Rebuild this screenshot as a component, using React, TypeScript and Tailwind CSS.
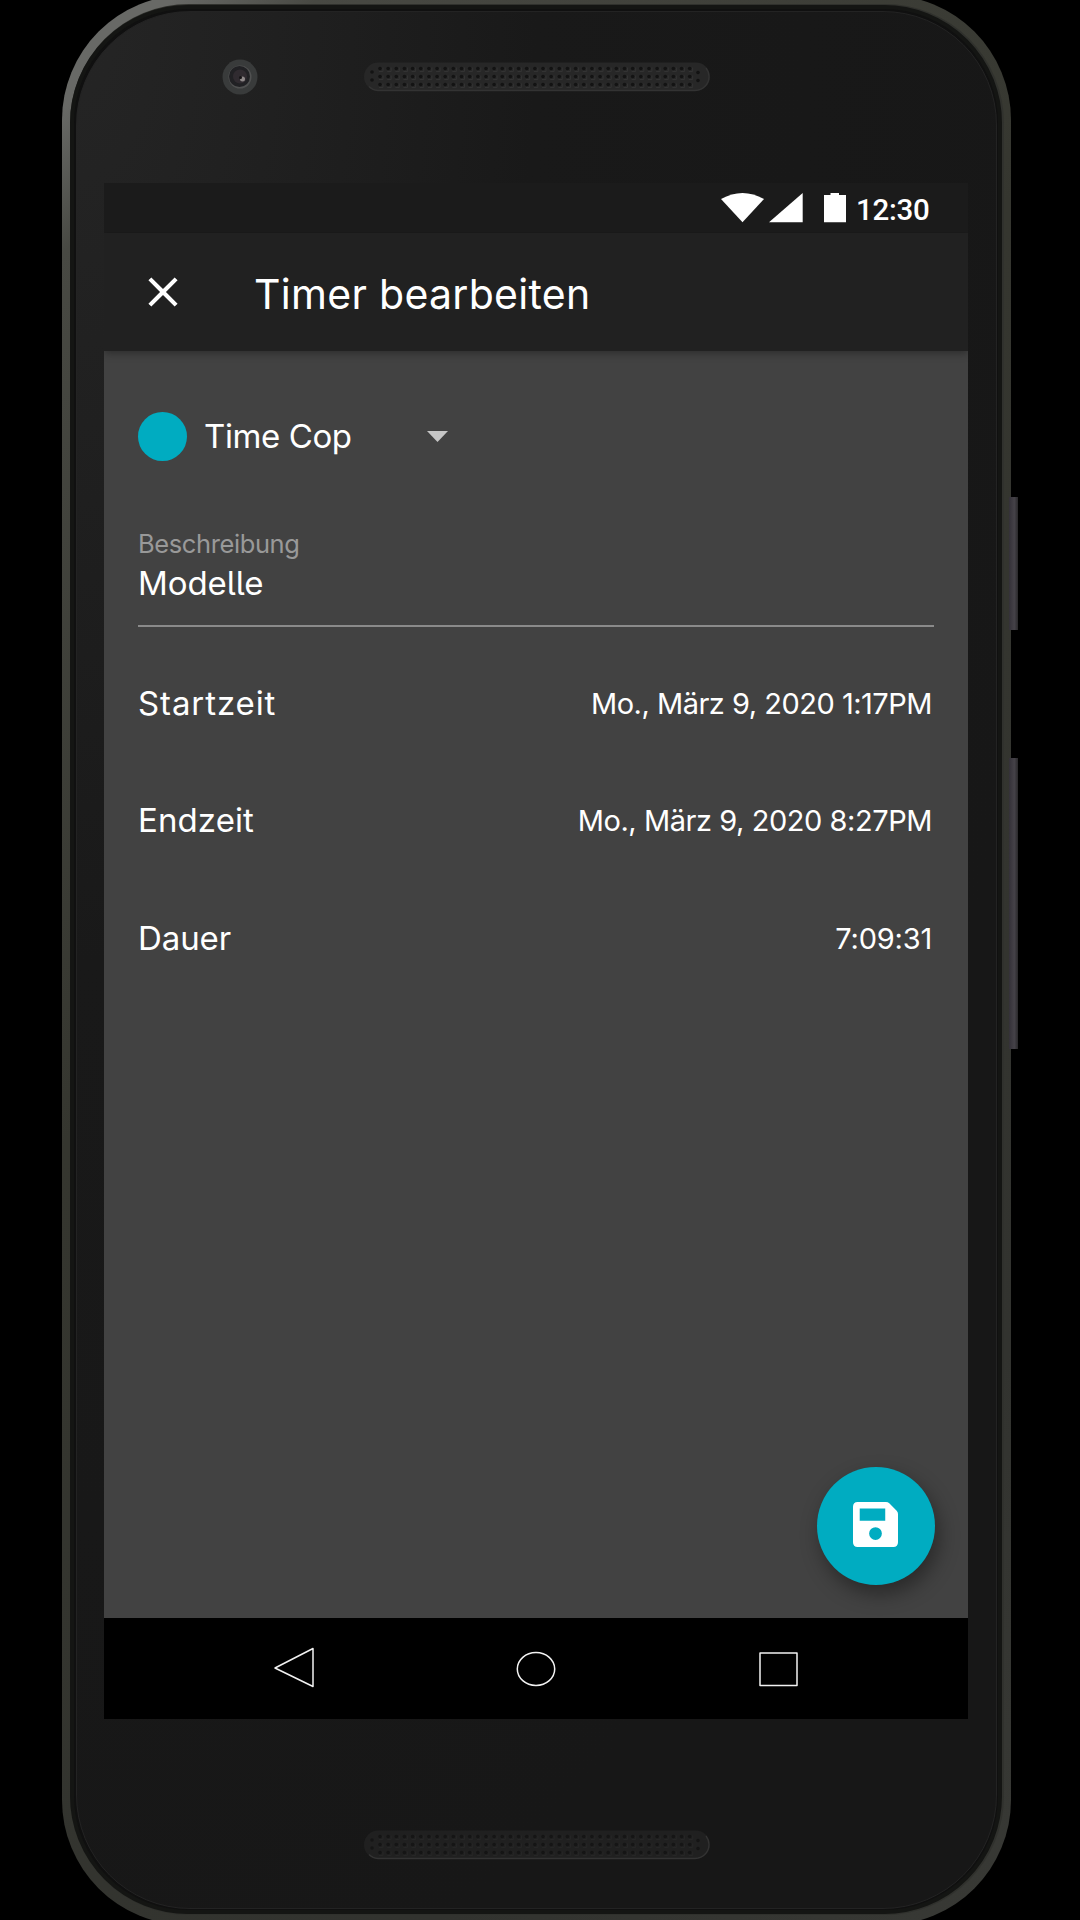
import React from "react";
import { MdClose } from "react-icons/md";

const columns = Array.from({ length: 39 }, (_, i) => 17 + i * 8.15);

function Speaker({ dim = false }: { dim?: boolean }) {
  const hole = dim ? "#151515" : "#131313";
  return (
    <svg className="block h-[30px] w-[348px]" viewBox="0 0 348 30">
      <rect x="1" y="0.5" width="346" height="28.5" rx="14.25" fill={dim ? "#202020" : "#272727"} />
      <path
        d="M6 24.5a14 14 0 0 0 9 4H332a14 14 0 0 0 14-13.5a14 14 0 0 0-3-9"
        fill="none"
        stroke="#333333"
        strokeWidth="1.3"
      />
      {columns.map((x) =>
        [6.5, 14.5, 22.5].map((y) => (
          <g key={`${x}-${y}`}>
            <path d={`M${x - 1} ${y + 3}h4v-4`} fill="none" stroke={dim ? "#262626" : "#333333"} strokeWidth="1" />
            <circle cx={x} cy={y} r="1.8" fill={hole} />
          </g>
        ))
      )}
      {[
        [9, 10],
        [9, 18],
        [335, 10.5],
        [335, 18.5],
      ].map(([x, y]) => (
        <circle key={`${x}-${y}`} cx={x} cy={y} r="1.8" fill={hole} />
      ))}
    </svg>
  );
}

function StatusBar() {
  return (
    <div className="flex h-[50px] items-start bg-[#1b1b1b] pl-[617px] font-['Roboto',sans-serif] text-white">
      <svg className="mt-[10px] h-[30px] w-[126px] shrink-0" viewBox="0 0 126 30" fill="#fff">
        <path d="M0 6Q21.500-6 43 6L21.500 29.300Z" />
        <path d="M48 29.300H81.700V0Z" />
        <path d="M103 2H109.500V0H118V2H125V29.300H103Z" />
      </svg>
      <span className="ml-[9px] mt-[9px] text-[29.500px] leading-[36px] font-medium tracking-[-0.3px]">12:30</span>
    </div>
  );
}

function Row({
  label,
  value,
  labelClass,
  valueClass,
}: {
  label: string;
  value: string;
  labelClass: string;
  valueClass: string;
}) {
  return (
    <div className="flex h-[117.600px] items-center justify-between pr-[2px]">
      <span className={`text-[33px] ${labelClass}`}>{label}</span>
      <span className={`text-[29px] ${valueClass}`}>{value}</span>
    </div>
  );
}

function Screen() {
  return (
    <div className="flex h-[1536px] w-[864px] flex-col bg-[#424242] font-['Inter',sans-serif] text-white [font-feature-settings:'cv05']">
      <StatusBar />
      <header className="z-10 flex h-[118px] shrink-0 items-center bg-[#212121] pl-[34px] shadow-[0_2px_8px_rgba(0,0,0,0.35)] [clip-path:inset(0_0_-20px_0)]">
        <MdClose className="size-[50px]" />
        <h1 className="ml-[66px] mt-[5px] text-[41px] leading-[50px] tracking-[0.3px]">Timer bearbeiten</h1>
      </header>
      <main className="relative flex grow flex-col px-[34px]">
        <div className="mt-[61px] flex h-[50px] items-center">
          <span className="size-[49px] rounded-full bg-[#00acc1]" />
          <span className="ml-[17px] w-[223px] text-[33px] tracking-[-0.4px]">Time Cop</span>
          <svg className="h-[11px] w-[21px]" viewBox="0 0 21 11">
            <path d="M0 0H21L10.500 11Z" fill="#c6c6c6" />
          </svg>
        </div>
        <div className="mt-[65px] flex h-[100px] flex-col border-b-2 border-[#8a8a8a]">
          <span className="text-[25.500px] leading-[34px] tracking-[-0.4px] text-[#999999]">Beschreibung</span>
          <span className="mt-[1px] text-[33px] leading-[42px] tracking-[-0.1px]">Modelle</span>
        </div>
        <div className="mt-[18px] flex flex-col">
          <Row
            label="Startzeit"
            value="Mo., März 9, 2020 1:17PM"
            labelClass="tracking-[0.9px]"
            valueClass="tracking-[-0.5px]"
          />
          <Row
            label="Endzeit"
            value="Mo., März 9, 2020 8:27PM"
            labelClass="tracking-[0.1px]"
            valueClass="tracking-[-0.45px]"
          />
          <Row label="Dauer" value="7:09:31" labelClass="tracking-[-0.1px]" valueClass="tracking-[-0.2px]" />
        </div>
        <button className="absolute right-[33.500px] bottom-[33px] flex size-[118px] items-center justify-center rounded-full bg-[#00acc1] shadow-[4px_9px_20px_rgba(0,0,0,0.38)]">
          <svg className="mr-[1px] mb-[3px] size-[45px]" viewBox="0 0 134 134">
            <path
              fill="#fff"
              fillRule="evenodd"
              d="M14 0H98Q104 0 108 4L130 26Q134 30 134 36V120Q134 134 120 134H14Q0 134 0 120V14Q0 0 14 0ZM20 19V56H96V19ZM67 75A19 19 0 1 0 67 113A19 19 0 1 0 67 75Z"
            />
          </svg>
        </button>
      </main>
      <nav className="h-[101px] shrink-0 bg-black">
        <svg className="block h-[101px] w-[864px]" viewBox="0 0 864 101" fill="none" stroke="#f2f2f2" strokeWidth="1.500" strokeLinejoin="round">
          <path d="M171 50L209 30.500V68.500Z" />
          <ellipse cx="432" cy="51" rx="18.700" ry="16.400" />
          <rect x="656" y="35" width="37" height="32.500" />
        </svg>
      </nav>
    </div>
  );
}

export default function App() {
  return (
    <div className="flex h-[1920px] w-[1080px] items-start overflow-hidden bg-black">
      <div className="-mt-[5px] ml-[62px] h-[1930px] w-[949px] shrink-0 rounded-[125px] bg-[linear-gradient(135deg,#686966_0%,#686966_4%,#484943_9%,#35362f_40%,#32332f_80%,#383935_100%)] pt-[10px] pr-[9px] pb-[11px] pl-[8px]">
        <div className="h-full rounded-[118px] border-[4px] border-[#141513] bg-[#101010] p-[1.500px] shadow-[1px_0_0_1px_#30312d]">
          <div className="flex h-full flex-col rounded-[114px] border border-[#232323] bg-[radial-gradient(ellipse_at_top_left,#252525_0px,#202020_200px,#191919_460px,#171717_1000px)]">
            <div className="flex h-[171px] shrink-0 items-start pl-[145px]">
              <svg className="mt-[47px] size-[36px]" viewBox="0 0 36 36">
                <circle cx="18" cy="18" r="17.500" fill="#393b3b" />
                <circle cx="18" cy="18" r="11.500" fill="#505151" />
                <circle cx="17.500" cy="17.500" r="10.500" fill="#212124" />
                <circle cx="18" cy="17.500" r="7" fill="#302b30" />
                <circle cx="20.500" cy="20" r="2.500" fill="#8f8989" />
                <circle cx="18.500" cy="18.500" r="1.500" fill="#151315" />
              </svg>
              <div className="mt-[50px] ml-[105px]">
                <Speaker />
              </div>
            </div>
            <div className="ml-[27.500px]">
              <Screen />
            </div>
            <div className="mt-[111px] ml-[286px]">
              <Speaker dim />
            </div>
          </div>
        </div>
      </div>
      <div className="-ml-[2px] flex flex-col pt-[497px]">
        <div className="h-[133px] w-[9px] bg-[linear-gradient(90deg,#343138,#454248_60%,#29282a)]" />
        <div className="mt-[128px] h-[291px] w-[9px] bg-[linear-gradient(90deg,#343138,#454248_60%,#29282a)]" />
      </div>
    </div>
  );
}
